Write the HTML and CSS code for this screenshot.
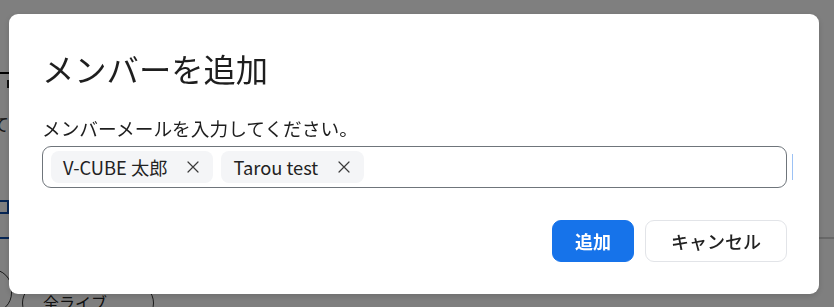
FILE: index.html
```html
<!DOCTYPE html>
<html lang="ja">
<head>
<meta charset="utf-8">
<title>メンバーを追加</title>
<link rel="stylesheet" href="styles.css">
</head>
<body>
<div class="page">
  <div class="head-bar"></div>
  <div class="head-stem"></div>
  <p class="head-text">て</p>
  <div class="tab-box"></div>
  <div class="tabs-line"><span class="tabs-active"></span></div>
  <div class="filters">
    <span class="pill pill-a"></span>
    <span class="pill pill-b">全ライブ</span>
  </div>
</div>

<div class="overlay"></div>

<div class="modal" role="dialog" aria-labelledby="modal-title">
  <h2 class="modal-title" id="modal-title">メンバーを追加</h2>
  <p class="modal-label">メンバーメールを入力してください。</p>
  <div class="field">
    <div class="tag-box">
      <span class="tag">
        <span class="tag-text">V-CUBE 太郎</span>
        <span class="tag-close" aria-label="削除">
          <svg viewBox="0 0 12 12" width="12" height="12"><path d="M1 1 L11 11 M11 1 L1 11" stroke="#3a3a3a" stroke-width="1.2" fill="none" stroke-linecap="round"/></svg>
        </span>
      </span>
      <span class="tag">
        <span class="tag-text">Tarou test</span>
        <span class="tag-close" aria-label="削除">
          <svg viewBox="0 0 12 12" width="12" height="12"><path d="M1 1 L11 11 M11 1 L1 11" stroke="#3a3a3a" stroke-width="1.2" fill="none" stroke-linecap="round"/></svg>
        </span>
      </span>
    </div>
    <span class="caret"></span>
  </div>
  <div class="actions">
    <button class="btn btn-primary" type="button">追加</button>
    <button class="btn btn-secondary" type="button">キャンセル</button>
  </div>
</div>
</body>
</html>
```

FILE: styles.css
```css
* { box-sizing: border-box; }

html, body {
  margin: 0;
  padding: 0;
  width: 834px;
  height: 307px;
  overflow: hidden;
  background: #ffffff;
  font-family: "Noto Sans CJK JP", "Noto Sans", sans-serif;
  color: #222;
}

/* ---- background page (mostly hidden behind the dialog) ---- */
.page {
  height: 307px;
  overflow: hidden;
  padding-top: 72px;
}
.head-bar {
  width: 9px;
  height: 2px;
  background: #000;
}
.head-stem {
  width: 2px;
  height: 8px;
  margin: 6px 0 0 7px;
  background: #222;
}
.head-text {
  margin: 24px 0 0 -8px;
  font-size: 17px;
  line-height: 24px;
  color: #333;
}
.tab-box {
  width: 20px;
  height: 14px;
  margin: 64px 0 0 -11px;
  border: 2px solid #0b4aa8;
}
.tabs-line {
  margin-top: 23px;
  height: 2px;
  background: #d0d0d0;
}
.tabs-active {
  display: block;
  width: 10px;
  height: 2px;
  background: #0b4aa8;
}
.filters {
  display: flex;
  align-items: flex-start;
  gap: 10px;
  margin-top: 30px;
}
.pill {
  display: block;
  border: 1px solid #333;
  border-radius: 20px;
  background: #fff;
  font-size: 16px;
  color: #222;
}
.pill-a {
  width: 52px;
  height: 44px;
  margin-left: -40px;
}
.pill-b {
  width: 132px;
  height: 40px;
  margin-top: 14px;
  padding: 6px 0 0 20px;
}

.overlay {
  position: fixed;
  inset: 0;
  background: rgba(0, 0, 0, 0.5);
}

/* ---- dialog ---- */
.modal {
  position: fixed;
  left: 9px;
  top: 14px;
  width: 810px;
  padding: 32px 32px 32px 33px;
  background: #fff;
  border-radius: 9px;
  box-shadow: 0 2px 6px rgba(0, 0, 0, 0.15);
}

.modal-title {
  margin: 0;
  font-size: 32.3px;
  line-height: 45px;
  font-weight: 400;
  color: #1e1e1e;
}

.modal-label {
  margin: 23px 0 0;
  font-size: 18.7px;
  line-height: 27px;
  font-weight: 400;
  color: #1e1e1e;
}

.field {
  position: relative;
  margin-top: 5px;
}

.tag-box {
  display: flex;
  align-items: center;
  gap: 8px;
  height: 42px;
  padding: 0 8px;
  border: 1px solid #6f757b;
  border-radius: 9px;
}

.caret {
  position: absolute;
  right: -6px;
  top: 8px;
  width: 1px;
  height: 26px;
  background: #9cc2f5;
}

.tag {
  display: flex;
  align-items: center;
  height: 32px;
  padding: 0 8px 0 12px;
  background: #f4f5f7;
  border-radius: 8px;
}

.tag-text {
  font-size: 18.3px;
  line-height: 24px;
  color: #222;
}

.tag-close {
  display: flex;
  align-items: center;
  justify-content: center;
  width: 24px;
  height: 24px;
  margin-left: 14px;
}

.actions {
  display: flex;
  justify-content: flex-end;
  gap: 11px;
  margin-top: 32px;
}

.btn {
  height: 42px;
  border-radius: 9px;
  font-family: "Noto Sans CJK JP", "Noto Sans", sans-serif;
  font-size: 18px;
  line-height: 24px;
  cursor: pointer;
}

.btn-primary {
  padding: 0 22px;
  border: 1px solid #1673ea;
  background: #1673ea;
  color: #fff;
  font-weight: 700;
}

.btn-secondary {
  padding: 0 25px;
  border: 1px solid #e2e4e8;
  background: #fff;
  color: #222;
  font-weight: 500;
}
```
